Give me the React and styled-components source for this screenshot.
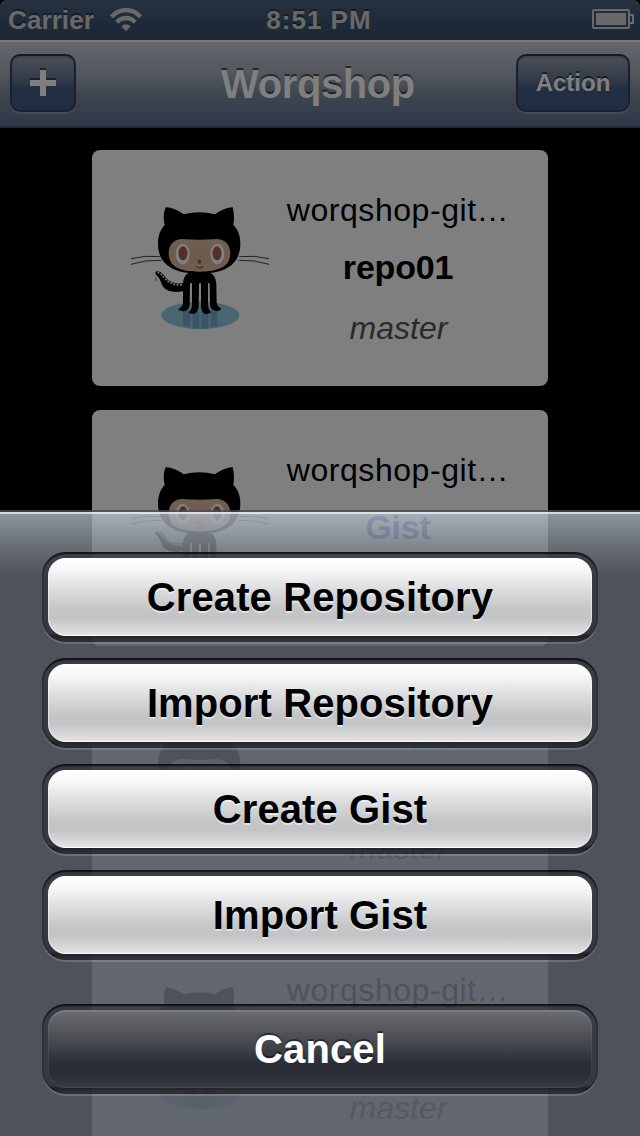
import React from 'react';
import styled, { createGlobalStyle } from 'styled-components';

const GlobalStyle = createGlobalStyle`
  body { margin: 0; background: #000; }
  * { box-sizing: border-box; }
`;

const Screen = styled.div`
  position: relative;
  width: 640px;
  height: 1136px;
  overflow: hidden;
  background: #000;
  font-family: 'Liberation Sans', Helvetica, Arial, sans-serif;
`;

const StatusBar = styled.header`
  display: grid;
  grid-template-columns: 1fr auto 1fr;
  align-items: center;
  height: 40px;
  padding: 0 6px 0 8px;
  border-radius: 6px 6px 0 0;
  background: linear-gradient(#4e6480, #465c78 35%, #3d5470 60%, #3c526e);
  color: #ced2d6;
  font-size: 26px;
  font-weight: bold;
  line-height: 40px;
  text-shadow: 0 -2px 0 rgba(0, 0, 0, 0.35);
`;

const Carrier = styled.div`
  display: flex;
  align-items: center;
  gap: 16px;
  letter-spacing: 0.1px;
`;

const Clock = styled.div`
  padding-right: 4px;
  letter-spacing: 1px;
`;

const BatteryIcon = styled.svg`
  justify-self: end;
`;

const NavBar = styled.nav`
  display: flex;
  align-items: center;
  justify-content: space-between;
  height: 88px;
  padding: 0 10px 2px;
  border-top: 2px solid #f3f4f6;
  border-bottom: 2px solid #3e526c;
  background: linear-gradient(#c7ccd7, #a9b0bd 36%, #7e8c9f 62%, #5b7190 100%);
  color: #fff;
  text-shadow: 0 -2px 0 rgba(0, 0, 0, 0.55);
`;

const Title = styled.h1`
  margin: 0;
  padding: 1px 0 0 44px;
  font-size: 40px;
  line-height: 46px;
  letter-spacing: -0.4px;
`;

const NavButton = styled.button`
  display: flex;
  align-items: center;
  justify-content: center;
  width: ${(p) => p.$width}px;
  height: 58px;
  padding: 0;
  border: 2px solid #33425a;
  border-top-color: #2c3340;
  border-radius: 10px;
  background: linear-gradient(#98a2b1, #667892 42%, #465e82 60%, #3f5986);
  box-shadow: 0 2px 0 rgba(255, 255, 255, 0.22), inset 0 2px 0 rgba(0, 0, 0, 0.16);
  color: inherit;
  font: bold 24px 'Liberation Sans', Arial, sans-serif;
  text-shadow: inherit;
`;

const CardList = styled.main`
  display: flex;
  flex-direction: column;
  align-items: center;
  gap: 24px;
  padding-top: 22px;
`;

const Card = styled.article`
  display: flex;
  flex: none;
  width: 456px;
  height: 236px;
  padding: 40px 32px 0 28px;
  border-radius: 8px;
  background: #fff;
`;

const Details = styled.div`
  flex: 1;
  display: flex;
  flex-direction: column;
  align-items: center;
  white-space: nowrap;
  line-height: 40px;
`;

const Owner = styled.div`
  font-size: 32px;
  letter-spacing: 0.55px;
`;

const RepoName = styled.div`
  margin-top: 17px;
  font-size: 34px;
  font-weight: bold;
  letter-spacing: -0.2px;
  color: ${(p) => (p.$gist ? '#2a2ac0' : '#000')};
`;

const Branch = styled.div`
  margin-top: 21px;
  padding-left: 1px;
  font-size: 32px;
  font-style: italic;
  color: #555;
`;

const Dimmer = styled.div`
  position: absolute;
  inset: 0;
  background: rgba(0, 0, 0, 0.5);
`;

const Sheet = styled.section`
  position: absolute;
  left: 0;
  right: 0;
  bottom: 0;
  height: 626px;
  padding: 40px 42px 0;
  border-top: 2px solid rgba(72, 77, 82, 0.8);
  background-clip: padding-box;
  background-image: linear-gradient(
    rgba(226, 231, 235, 0.95) 2px,
    rgba(178, 186, 196, 0.79) 2px,
    rgba(125, 132, 142, 0.8) 38px,
    rgba(100, 105, 115, 0.83) 58px,
    rgba(93, 98, 108, 0.84) 68px
  );
  display: flex;
  flex-direction: column;
  gap: 16px;
`;

const ButtonFrame = styled.div`
  height: 90px;
  padding: 6px;
  margin-top: ${(p) => (p.$separated ? 28 : 0)}px;
  border-radius: 24px;
  background: linear-gradient(
    rgba(30, 32, 38, 0.6),
    rgba(48, 51, 60, 0.7) 7%,
    rgba(42, 45, 53, 0.72) 90%,
    rgba(20, 22, 25, 0.8) 94%,
    rgba(44, 47, 52, 0.75)
  );
  box-shadow: 0 2px 0 rgba(190, 205, 210, 0.24), inset 0 2px 1px rgba(0, 0, 0, 0.6),
    inset 0 0 2px 1px rgba(0, 0, 0, 0.25);
`;

const SheetButton = styled.button`
  display: block;
  width: 100%;
  height: 78px;
  padding: 0;
  border: 0;
  border-radius: 18px;
  font: bold 40px/78px 'Liberation Sans', Arial, sans-serif;
  letter-spacing: 0.1px;
  background: ${(p) =>
    p.$dark
      ? 'linear-gradient(#6b6d70, #5a5c61 20%, #42454c 45%, #2b2e38 68%, #2b2e37 84%, #373e46)'
      : 'linear-gradient(#fff, #f8f8f8 14%, #dedfe0 38%, #c4c5c7 65%, #c3c4c6 77%, #e2e2e2 98%, #fff)'};
  color: ${(p) => (p.$dark ? '#fff' : '#000')};
  text-shadow: ${(p) => (p.$dark ? '0 -2px 0 rgba(0,0,0,.45)' : '0 2px 0 rgba(255,255,255,.5)')};
  box-shadow: ${(p) =>
    p.$dark
      ? 'inset 0 2px 1px rgba(145,152,160,.4), inset 0 0 1px 1px rgba(100,110,120,.25)'
      : 'inset 0 0 1px 1px rgba(255,255,255,.5)'};
`;

function WifiIcon() {
  return (
    <svg width="32" height="24" viewBox="0 0 32 24">
      <g fill="none" stroke="#ced2d6" strokeWidth="4.4">
        <path d="M1.600 8.800C9.500-.200 22.500-.200 30.400 8.800" />
        <path d="M6.800 14.200C12 8.600 20 8.600 25.200 14.200" />
      </g>
      <path fill="#ced2d6" d="M11.300 18.400Q16 14 20.700 18.400L16 23.200Z" />
    </svg>
  );
}

function Battery() {
  return (
    <BatteryIcon width="42" height="22" viewBox="0 0 42 22">
      <path d="M1 0h36" stroke="#2a3950" strokeWidth="1" />
      <rect x="1" y="1" width="36" height="18" rx="1" fill="none" stroke="#ced2d6" strokeWidth="2" />
      <rect x="4" y="4" width="30" height="12" fill="#ced2d6" />
      <path d="M38 6h3v8h-3" fill="none" stroke="#ced2d6" strokeWidth="2" />
    </BatteryIcon>
  );
}

function PlusIcon() {
  return (
    <svg width="26" height="30" viewBox="0 0 26 30">
      <path fill="#30405a" d="M10 0h6v10h10v6H16v10h-6V16H0v-6h10z" />
      <path fill="#fff" d="M10 2h6v10h10v6H16v10h-6V18H0v-6h10z" />
    </svg>
  );
}

function Octocat() {
  return (
    <svg width="160" height="150" viewBox="0 0 480 450">
      <defs>
        <linearGradient id="skin" x1="0" y1="0" x2="0" y2="1">
          <stop offset="0" stopColor="#e6c0a8" />
          <stop offset="0.5" stopColor="#dcb49c" />
          <stop offset="1" stopColor="#e2bca6" />
        </linearGradient>
      </defs>
      <ellipse cx="241" cy="376" rx="117" ry="41" fill="#90cbe0" />
      <g fill="#78a8d0">
        <path d="M189 362h22v50l-22-5zM218 365h20v51h-20zM245 365h20v51h-20zM272 362h20v46l-20 4z" />
      </g>
      <g fill="none" stroke="#444" strokeWidth="3">
        <path d="M33 206Q76 195 122 200M33 223Q76 209 124 211M447 206Q404 195 358 200M447 223Q404 209 356 211" />
      </g>
      <path
        d="M137 52C151 51 174 60 191 73Q237 60 285 73C302 60 325 51 338 52Q345 78 340 105C354 119 361 137 361 160C361 214 330 250 238 251C146 250 114 214 114 160C114 137 121 119 134 105Q127 74 137 52Z"
        fill="#000"
      />
      <path
        d="M185 147Q238 151 291 147C316 148 331 166 331 190C331 229 298 245 238 245C178 245 146 229 146 190C146 165 160 149 185 147Z"
        fill="url(#skin)"
      />
      <ellipse cx="188" cy="192" rx="21" ry="31" fill="#fff" />
      <ellipse cx="292" cy="192" rx="21" ry="31" fill="#fff" />
      <ellipse cx="189" cy="190" rx="13.5" ry="21" fill="#ad5c51" />
      <ellipse cx="291" cy="190" rx="13.5" ry="21" fill="#ad5c51" />
      <circle cx="238" cy="215" r="5.500" fill="#ad5c51" />
      <path d="M228 228Q238 241 249 228" fill="none" stroke="#995548" strokeWidth="3.500" />
      <path
        d="M205 249L272 249Q288 258 289 282L290 337Q291 350 304 356Q300 365 285 362Q271 359 270 344L269 280L264 280L264 345Q264 358 273 367Q266 374 254 371Q243 366 243 348L243 280L237 280L236 348Q235 367 223 371Q211 374 206 367Q216 359 216 345L216 280L210 280L209 344Q208 359 195 363Q178 365 174 358Q188 351 189 340L189 304C162 309 136 305 127 286C122 274 117 260 107 253Q103 246 111 244C124 243 130 255 138 263C150 278 170 282 189 280Q190 258 205 249Z"
        fill="#000"
      />
      <path
        d="M115 248C132 252 136 286 184 285"
        fill="none"
        stroke="#bfe0d5"
        strokeWidth="6"
        strokeLinecap="round"
        strokeDasharray="1 9"
      />
      <path d="M108 258Q103 269 106 273Q112 274 110 266Z" fill="#79b9d2" />
    </svg>
  );
}

const repos = [
  { name: 'repo01', branch: 'master' },
  { name: 'Gist', gist: true },
  { name: 'repo02', branch: 'master' },
  { name: 'repo03', branch: 'master' },
];

const actions = ['Create Repository', 'Import Repository', 'Create Gist', 'Import Gist'];

export default function App() {
  return (
    <>
      <GlobalStyle />
      <Screen>
        <StatusBar>
          <Carrier>
            Carrier
            <WifiIcon />
          </Carrier>
          <Clock>8:51 PM</Clock>
          <Battery />
        </StatusBar>
        <NavBar>
          <NavButton $width={66} aria-label="Add">
            <PlusIcon />
          </NavButton>
          <Title>Worqshop</Title>
          <NavButton $width={114}>Action</NavButton>
        </NavBar>
        <CardList>
          {repos.map((repo) => (
            <Card key={repo.name}>
              <Octocat />
              <Details>
                <Owner>worqshop-git…</Owner>
                <RepoName $gist={repo.gist}>{repo.name}</RepoName>
                <Branch>{repo.branch}</Branch>
              </Details>
            </Card>
          ))}
        </CardList>
        <Dimmer />
        <Sheet>
          {actions.map((label) => (
            <ButtonFrame key={label}>
              <SheetButton>{label}</SheetButton>
            </ButtonFrame>
          ))}
          <ButtonFrame $separated>
            <SheetButton $dark>Cancel</SheetButton>
          </ButtonFrame>
        </Sheet>
      </Screen>
    </>
  );
}
